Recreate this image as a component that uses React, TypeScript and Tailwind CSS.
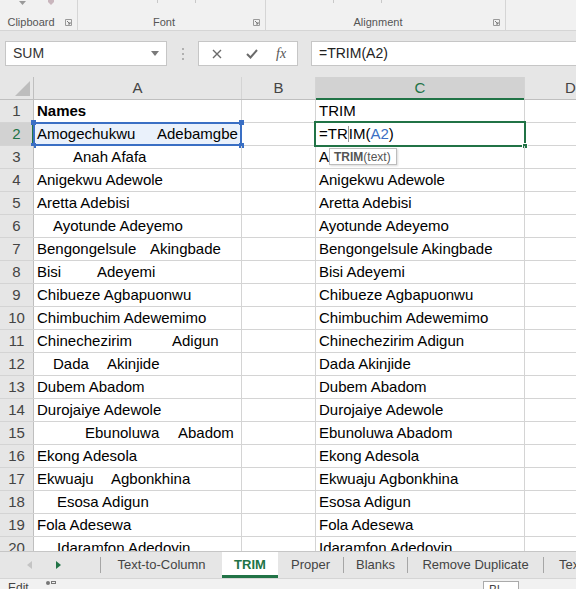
import React from 'react';

type Seg = { t: string; w?: string };
type Row = { a: Seg[]; c: string; pl?: string; bold?: boolean };

const rows: Row[] = [
  { a: [{ t: 'Names' }], c: 'TRIM', bold: true },
  { a: [{ t: 'Amogechukwu', w: 'w-[120px]' }, { t: 'Adebamgbe' }], c: '' },
  { a: [{ t: 'Anah Afafa' }], c: 'Anah Afafa', pl: 'pl-[39px]' },
  { a: [{ t: 'Anigekwu Adewole' }], c: 'Anigekwu Adewole' },
  { a: [{ t: 'Aretta Adebisi' }], c: 'Aretta Adebisi' },
  { a: [{ t: 'Ayotunde Adeyemo' }], c: 'Ayotunde Adeyemo', pl: 'pl-[19px]' },
  { a: [{ t: 'Bengongelsule', w: 'w-[113px]' }, { t: 'Akingbade' }], c: 'Bengongelsule Akingbade' },
  { a: [{ t: 'Bisi', w: 'w-[60px]' }, { t: 'Adeyemi' }], c: 'Bisi Adeyemi' },
  { a: [{ t: 'Chibueze Agbapuonwu' }], c: 'Chibueze Agbapuonwu' },
  { a: [{ t: 'Chimbuchim Adewemimo' }], c: 'Chimbuchim Adewemimo' },
  { a: [{ t: 'Chinechezirim', w: 'w-[135px]' }, { t: 'Adigun' }], c: 'Chinechezirim Adigun' },
  { a: [{ t: 'Dada', w: 'w-[54px]' }, { t: 'Akinjide' }], c: 'Dada Akinjide', pl: 'pl-[19px]' },
  { a: [{ t: 'Dubem Abadom' }], c: 'Dubem Abadom' },
  { a: [{ t: 'Durojaiye Adewole' }], c: 'Durojaiye Adewole' },
  { a: [{ t: 'Ebunoluwa', w: 'w-[93px]' }, { t: 'Abadom' }], c: 'Ebunoluwa Abadom', pl: 'pl-[51px]' },
  { a: [{ t: 'Ekong Adesola' }], c: 'Ekong Adesola' },
  { a: [{ t: 'Ekwuaju', w: 'w-[74px]' }, { t: 'Agbonkhina' }], c: 'Ekwuaju Agbonkhina' },
  { a: [{ t: 'Esosa Adigun' }], c: 'Esosa Adigun', pl: 'pl-[23px]' },
  { a: [{ t: 'Fola Adesewa' }], c: 'Fola Adesewa' },
  { a: [{ t: 'Idaramfon Adedoyin' }], c: 'Idaramfon Adedoyin', pl: 'pl-[23px]' },
];

// 리본 그룹
const RibbonGroup = ({ label, width, launcher = true }: { label: string; width: string; launcher?: boolean }) => (
  <div className={`relative h-full border-r border-[#d5d5d5] ${width}`}>
    <div className="absolute left-0 right-[15px] bottom-0 text-center text-[11px] text-[#555]">{label}</div>
    {launcher && (
      <svg className="absolute right-[5px] bottom-[4px]" width="7" height="7" viewBox="0 0 7 7">
        <path d="M0.5 0.5h6v6h-6z" fill="none" stroke="#9a9a9a" />
        <path d="M2 2l3 3M5 3v2h-2" fill="none" stroke="#7a7a7a" />
      </svg>
    )}
  </div>
);

const TabSep = () => <div className="h-[16px] w-px bg-[#a6a6a6] shrink-0" />;

export default function App() {
  return (
    <div className="w-[576px] h-[589px] overflow-hidden flex flex-col bg-white font-['Liberation_Sans',Arial,sans-serif]">
      {/* 리본 */}
      <div className="relative h-[31px] shrink-0 bg-[#f1f1f1] border-b border-[#d5d5d5] flex">
        <RibbonGroup label="Clipboard" width="w-[78px]" />
        <RibbonGroup label="Font" width="w-[188px]" />
        <RibbonGroup label="Alignment" width="w-[240px]" />
        <svg className="absolute left-[19px] top-[1px]" width="7" height="4" viewBox="0 0 7 4">
          <path d="M0 0h7l-3.5 4z" fill="#9a9a9a" />
        </svg>
        <svg className="absolute left-[46px] top-0" width="10" height="5" viewBox="0 0 10 5">
          <path d="M2 0h6v2l-3 3-3-3z" fill="#c9b6bd" />
        </svg>
        <div className="absolute left-[157px] top-0 h-[3px] w-px bg-[#c8c8c8]" />
        <div className="absolute left-[195px] top-0 h-[3px] w-px bg-[#c8c8c8]" />
        <div className="absolute left-[333px] top-0 h-[3px] w-px bg-[#c8c8c8]" />
        <div className="absolute left-[381px] top-0 h-[3px] w-px bg-[#c8c8c8]" />
      </div>

      {/* 수식 입력줄 */}
      <div className="h-[46px] shrink-0 bg-[#e6e6e6] flex items-start pt-[10px]">
        <div className="ml-[5px] w-[162px] h-[25px] bg-white border border-[#c6c6c6] flex items-center justify-between pl-[7px] pr-[7px] text-[14px] text-[#333]">
          <span>SUM</span>
          <svg width="8" height="5" viewBox="0 0 8 5">
            <path d="M0 0h8l-4 5z" fill="#7a7a7a" />
          </svg>
        </div>
        <div className="w-[31px] h-[25px] flex flex-col items-center justify-center gap-[3px]">
          <div className="w-[2px] h-[2px] bg-[#b0b0b0]" />
          <div className="w-[2px] h-[2px] bg-[#b0b0b0]" />
          <div className="w-[2px] h-[2px] bg-[#b0b0b0]" />
        </div>
        <div className="w-[100px] h-[25px] bg-white border border-[#c6c6c6] flex items-center">
          <svg className="ml-[13px]" width="10" height="10" viewBox="0 0 10 10">
            <path d="M1 1l8 8M9 1l-8 8" stroke="#6a6a6a" strokeWidth="1.4" />
          </svg>
          <svg className="ml-[24px]" width="12" height="10" viewBox="0 0 12 10">
            <path d="M1 5l3.5 3.5L11 1" fill="none" stroke="#6a6a6a" strokeWidth="2" />
          </svg>
          <span className="ml-[18px] italic text-[14px] text-[#555] font-['Liberation_Serif',serif]">fx</span>
        </div>
        <div className="ml-[13px] flex-1 h-[25px] bg-white border border-r-0 border-[#c6c6c6] flex items-center pl-[7px] text-[14px] text-[#222]">
          =TRIM(A2)
        </div>
      </div>

      {/* 시트 영역 */}
      <div className="relative flex-1 overflow-hidden text-[15px] text-black">
        {/* 열 머리글 */}
        <div className="flex h-[23px] bg-[#e6e6e6] border-b border-[#bfbfbf] text-[#444]">
          <div className="relative w-[34px] border-r border-[#bfbfbf]">
            <svg className="absolute right-[3px] bottom-[3px]" width="15" height="15" viewBox="0 0 15 15">
              <path d="M15 0v15h-15z" fill="#bdbdbd" />
            </svg>
          </div>
          <div className="w-[208px] border-r border-[#d4d4d4] flex items-center justify-center">A</div>
          <div className="w-[74px] border-r border-[#d4d4d4] flex items-center justify-center">B</div>
          <div className="w-[209px] border-r border-[#d4d4d4] bg-[#d2d2d2] text-[#217346] flex items-center justify-center relative">
            C
            <div className="absolute left-0 right-0 bottom-[-1px] h-[2px] bg-[#217346]" />
          </div>
          <div className="flex-1 flex items-center justify-center pl-[40px]">D</div>
        </div>

        {/* 행 */}
        {rows.map((r, i) => {
          const n = i + 1;
          const isActive = n === 2;
          return (
            <div key={n} className="flex h-[23px] border-b border-[#d4d4d4]">
              <div
                className={`relative w-[34px] shrink-0 flex items-center justify-center border-r ${
                  isActive ? 'bg-[#d2d2d2] text-[#217346] border-[#217346]' : 'bg-[#e6e6e6] text-[#444] border-[#bfbfbf]'
                }`}
              >
                {n}
                {isActive && <div className="absolute right-[-1px] top-0 bottom-0 w-[2px] bg-[#217346]" />}
              </div>
              <div
                className={`relative w-[208px] shrink-0 border-r border-[#d4d4d4] flex items-center whitespace-nowrap overflow-visible ${r.pl ?? 'pl-[3px]'} ${
                  r.bold ? 'font-bold' : ''
                } ${isActive ? 'bg-[#eaf1fb]' : ''}`}
              >
                {r.a.map((s, j) => (
                  <span key={j} className={s.w ? `inline-block ${s.w}` : ''}>
                    {s.t}
                  </span>
                ))}
                {isActive && (
                  <>
                    <div className="absolute left-[-1px] right-[-1px] top-[-1px] bottom-[-1px] border-2 border-[#3a6fc4]" />
                    <div className="absolute left-[-3px] top-[-3px] w-[5px] h-[5px] bg-[#3a6fc4]" />
                    <div className="absolute right-[-3px] top-[-3px] w-[5px] h-[5px] bg-[#3a6fc4]" />
                    <div className="absolute left-[-3px] bottom-[-3px] w-[5px] h-[5px] bg-[#3a6fc4]" />
                    <div className="absolute right-[-3px] bottom-[-3px] w-[5px] h-[5px] bg-[#3a6fc4]" />
                  </>
                )}
              </div>
              <div className="w-[74px] shrink-0 border-r border-[#d4d4d4]" />
              <div className="relative w-[209px] shrink-0 border-r border-[#d4d4d4] flex items-center pl-[3px] whitespace-nowrap">
                {isActive ? (
                  <>
                    <span>=TR</span>
                    <span className="w-px h-[16px] bg-[#999]" />
                    <span>IM(</span>
                    <span className="text-[#3a6fc4]">A2</span>
                    <span>)</span>
                    <div className="absolute left-[-2px] right-[-2px] top-[-2px] bottom-[-2px] border-2 border-[#217346]" />
                    <div className="absolute right-[-4px] bottom-[-4px] w-[6px] h-[6px] bg-[#217346] border border-white" />
                  </>
                ) : (
                  r.c
                )}
              </div>
              <div className="flex-1" />
            </div>
          );
        })}

        {/* 함수 도움말 */}
        <div className="absolute left-[329px] top-[71px] h-[17px] w-[68px] bg-white border border-[#bdbdbd] shadow-[1px_1px_2px_rgba(0,0,0,0.15)] flex items-center pl-[4px] text-[12px] text-[#555] leading-none">
          <span className="font-bold">TRIM</span>
          <span>(text)</span>
        </div>
      </div>

      {/* 시트 탭 */}
      <div className="h-[27px] shrink-0 bg-[#e6e6e6] border-t border-[#c6c6c6] flex items-stretch text-[13px] text-[#444]">
        <div className="w-[100px] shrink-0 flex items-center">
          <svg className="ml-[27px]" width="5" height="8" viewBox="0 0 5 8">
            <path d="M5 0v8l-5-4z" fill="#c4c4c4" />
          </svg>
          <svg className="ml-[24px]" width="5" height="8" viewBox="0 0 5 8">
            <path d="M0 0v8l5-4z" fill="#217346" />
          </svg>
        </div>
        <div className="flex items-center"><TabSep /></div>
        <div className="w-[121px] shrink-0 flex items-center justify-center">Text-to-Column</div>
        <div className="w-[56px] shrink-0 flex items-center justify-center bg-white text-[#217346] font-bold border-b-[3px] border-[#217346] pt-[2px]">
          TRIM
        </div>
        <div className="w-[65px] shrink-0 flex items-center justify-center">Proper</div>
        <div className="flex items-center"><TabSep /></div>
        <div className="w-[63px] shrink-0 flex items-center justify-center">Blanks</div>
        <div className="flex items-center"><TabSep /></div>
        <div className="w-[135px] shrink-0 flex items-center justify-center">Remove Duplicate</div>
        <div className="flex items-center"><TabSep /></div>
        <div className="flex items-center pl-[15px] whitespace-nowrap">Text</div>
      </div>

      {/* 상태 표시줄 */}
      <div className="relative h-[11px] shrink-0 bg-[#f1f1f1] border-t border-[#d5d5d5] overflow-hidden text-[12px] text-[#444]">
        <span className="absolute left-[8px] top-[3px] leading-none">Edit</span>
        <div className="absolute left-[46px] top-[2px] w-[4px] h-[4px] rounded-full bg-[#777]" />
        <div className="absolute left-[51px] top-[2px] w-[5px] h-[3px] border border-[#777]" />
        <div className="absolute left-[483px] top-[2px] w-[36px] h-[14px] bg-white border border-[#aaa] pl-[5px] pt-[2px] leading-none">Bl</div>
      </div>
    </div>
  );
}
